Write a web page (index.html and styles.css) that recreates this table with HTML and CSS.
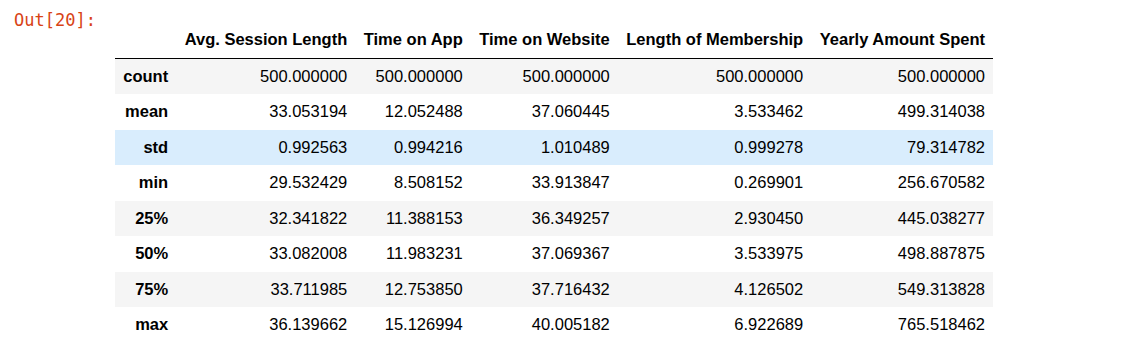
FILE: index.html
```html
<!DOCTYPE html>
<html lang="en">
  <head>
    <meta charset="UTF-8" />
    <title>Out[20]</title>
    <link rel="stylesheet" href="styles.css">
  </head>
  <body>
    <div class="output-area">
      <div class="out-prompt">Out[20]:</div>
      <div class="output-html">
        <table class="dataframe">
          <thead>
            <tr>
              <th></th>
              <th>Avg. Session Length</th>
              <th>Time on App</th>
              <th>Time on Website</th>
              <th>Length of Membership</th>
              <th>Yearly Amount Spent</th>
            </tr>
          </thead>
          <tbody>
            <tr>
              <th>count</th>
              <td>500.000000</td>
              <td>500.000000</td>
              <td>500.000000</td>
              <td>500.000000</td>
              <td>500.000000</td>
            </tr>
            <tr>
              <th>mean</th>
              <td>33.053194</td>
              <td>12.052488</td>
              <td>37.060445</td>
              <td>3.533462</td>
              <td>499.314038</td>
            </tr>
            <tr class="row-hover">
              <th>std</th>
              <td>0.992563</td>
              <td>0.994216</td>
              <td>1.010489</td>
              <td>0.999278</td>
              <td>79.314782</td>
            </tr>
            <tr>
              <th>min</th>
              <td>29.532429</td>
              <td>8.508152</td>
              <td>33.913847</td>
              <td>0.269901</td>
              <td>256.670582</td>
            </tr>
            <tr>
              <th>25%</th>
              <td>32.341822</td>
              <td>11.388153</td>
              <td>36.349257</td>
              <td>2.930450</td>
              <td>445.038277</td>
            </tr>
            <tr>
              <th>50%</th>
              <td>33.082008</td>
              <td>11.983231</td>
              <td>37.069367</td>
              <td>3.533975</td>
              <td>498.887875</td>
            </tr>
            <tr>
              <th>75%</th>
              <td>33.711985</td>
              <td>12.753850</td>
              <td>37.716432</td>
              <td>4.126502</td>
              <td>549.313828</td>
            </tr>
            <tr>
              <th>max</th>
              <td>36.139662</td>
              <td>15.126994</td>
              <td>40.005182</td>
              <td>6.922689</td>
              <td>765.518462</td>
            </tr>
          </tbody>
        </table>
      </div>
    </div>
  </body>
</html>
```

FILE: styles.css
```css
/* Page */
body {
  margin: 0;
  background: #fff;
  color: #000;
  font-family: "Liberation Sans", Arial, sans-serif;
}

/* One output cell: prompt on the left, rendered html on the right */
.output-area {
  display: flex;
  align-items: flex-start;
}

.out-prompt {
  flex: 0 0 115px;
  box-sizing: border-box;
  padding: 10px 0 0 14px;
  font-family: "DejaVu Sans Mono", "Liberation Mono", monospace;
  font-size: 17px;
  line-height: 20px;
  color: #d84315; /* notebook output prompt red */
}

.output-html {
  padding-top: 22px;
}

/* pandas dataframe table */
.dataframe {
  border-collapse: collapse;
  border: none;
  font-size: 16.5px;
  color: #000;
}

.dataframe th,
.dataframe td {
  text-align: right;
  vertical-align: middle;
  padding: 0.5em 0.5em;
  line-height: normal;
  white-space: nowrap;
  border: none;
}

.dataframe th {
  font-weight: bold;
}

.dataframe thead {
  border-bottom: 1px solid #000;
}

/* zebra rows */
.dataframe tbody tr:nth-child(odd) {
  background: #f5f5f5;
}

/* row under the mouse */
.dataframe tbody tr.row-hover {
  background: rgba(66, 165, 245, 0.2);
}
```
